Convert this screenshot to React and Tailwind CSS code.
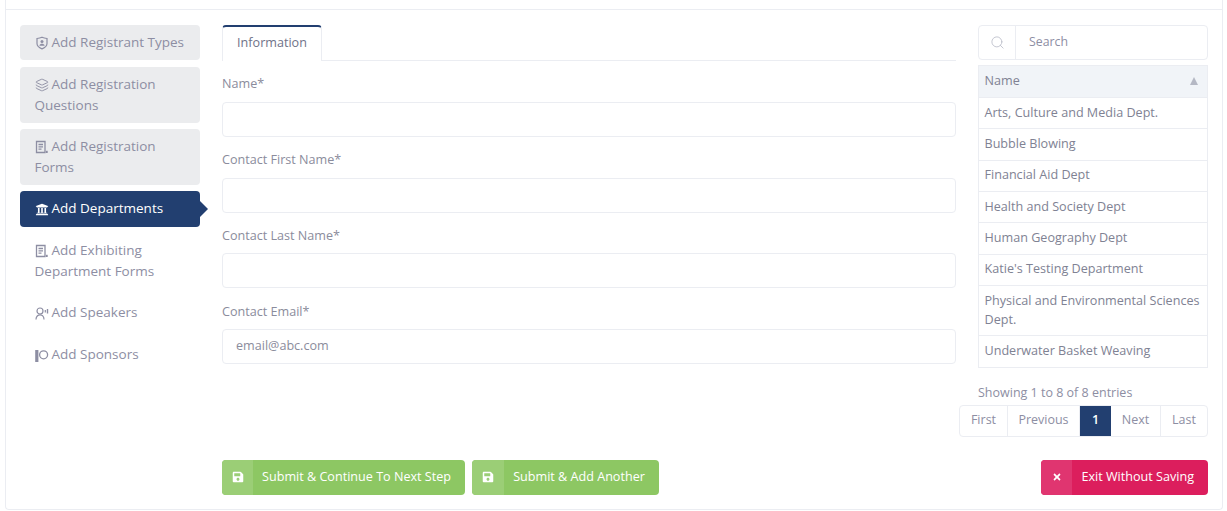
import { FaSave, FaTimes, FaUniversity } from "react-icons/fa";
import { Layers, Search } from "lucide-react";

const FONT = "font-['Open_Sans',sans-serif]";
const ICON = "inline-block w-3.5 h-3.5 mr-[3px] align-[-3px]";

function ShieldIcon() {
  return (
    <svg viewBox="0 0 14 14" className={ICON} fill="none" stroke="currentColor" strokeWidth="1.200">
      <path d="M2 2.500c2-.2 3.500-.6 5-1.300 1.500.7 3 1.100 5 1.300v5c0 2.500-2.200 4.200-5 5.400-2.800-1.200-5-2.900-5-5.400z" />
      <circle cx="7" cy="5.600" r="1.500" fill="currentColor" stroke="none" />
      <path d="M4.300 9.800c.4-1.500 1.500-2 2.700-2s2.300.5 2.700 2z" fill="currentColor" stroke="none" />
    </svg>
  );
}

function FormIcon() {
  return (
    <svg viewBox="0 0 14 14" className={ICON} fill="none" stroke="currentColor" strokeWidth="1.300">
      <path d="M1.500 1.500h8.500v11h-8.500z" />
      <path d="M3.500 4.500h4.500M3.500 6.800h4.500M3.500 9.100h3" />
      <path d="M11.800 10.800v2.200" strokeWidth="1.800" />
    </svg>
  );
}

function SpeakerIcon() {
  return (
    <svg viewBox="0 0 14 14" className={ICON} fill="none" stroke="currentColor" strokeWidth="1.200">
      <circle cx="5" cy="5" r="3" />
      <path d="M1 13.500c0-3 2-4.700 4-4.700s4 1.700 4 4.700" />
      <path d="M10.300 4v2.500" strokeWidth="1.200" />
      <path d="M12.500 3v4.500" strokeWidth="1.400" />
    </svg>
  );
}

function SponsorIcon() {
  return (
    <svg viewBox="0 0 14 14" className={ICON} fill="none" stroke="currentColor">
      <path d="M1.800 2v12" strokeWidth="3.200" />
      <circle cx="8.600" cy="6.800" r="4" strokeWidth="1.300" />
    </svg>
  );
}

const navItems = [
  { label: "Add Registrant Types", icon: <ShieldIcon />, filled: true, h: "h-[35px] mb-px" },
  { label: "Add Registration Questions", icon: <Layers className={ICON} strokeWidth={1.6} />, filled: true },
  { label: "Add Registration Forms", icon: <FormIcon />, filled: true },
  { label: "Add Departments", icon: <FaUniversity className="mr-[3px] inline-block h-[13px] w-3.5 align-[-3px]" />, active: true, h: "h-9" },
  { label: "Add Exhibiting Department Forms", icon: <FormIcon /> },
  { label: "Add Speakers", icon: <SpeakerIcon />, h: "h-9" },
  { label: "Add Sponsors", icon: <SponsorIcon />, h: "h-9" },
];

const fields = [
  { label: "Name*", mt: "mt-2" },
  { label: "Contact First Name*", mt: "mt-2" },
  { label: "Contact Last Name*", mt: "mt-[7px]", mb: "mb-px" },
  { label: "Contact Email*", mt: "mt-[7px]", placeholder: "email@abc.com" },
];

const departments = [
  "Arts, Culture and Media Dept.",
  "Bubble Blowing",
  "Financial Aid Dept",
  "Health and Society Dept",
  "Human Geography Dept",
  "Katie's Testing Department",
  "Physical and Environmental Sciences Dept.",
  "Underwater Basket Weaving",
];

const pages = [
  { label: "First", w: "w-[48px]" },
  { label: "Previous", w: "w-[72px]" },
  { label: "1", w: "w-[31px]" },
  { label: "Next", w: "w-[50px]" },
  { label: "Last", w: "flex-1" },
];

function NavItem({ item }) {
  let color = "text-[#8d8ea3]";
  if (item.filled) color = "bg-[#ebecee] text-[#8d8ea3]";
  if (item.active) color = "bg-[#223f70] text-white";
  return (
    <div className={`relative rounded pl-[14.500px] pr-[10px] py-[7px] text-[13.500px] leading-[21px] ${color} ${item.h || ""}`}>
      {item.icon}
      {item.label}
      {item.active ? (
        <span className="absolute left-full top-1/2 -translate-y-1/2 border-y-[8px] border-l-[8px] border-y-transparent border-l-[#223f70]" />
      ) : null}
    </div>
  );
}

function ActionButton({ icon, label, color, shade, w }) {
  return (
    <button className={`flex h-[35px] items-stretch overflow-hidden rounded text-[12.600px] text-white ${color} ${w}`}>
      <span className={`flex w-8 items-center justify-center pb-px ${shade}`}>{icon}</span>
      <span className="flex flex-1 items-center justify-center pb-px pl-[9px] pr-[14px] whitespace-nowrap">{label}</span>
    </button>
  );
}

export default function App() {
  return (
    <div className={`${FONT} h-[511px] w-[1227px] overflow-hidden bg-white pl-[5px] pr-[4px]`}>
      <div className="h-[510px] rounded-b border-x border-b border-[#ebedf2] pt-[9px]">
        <div className="flex h-full flex-col border-t border-[#ebedf2] pl-[14px] pr-[14px] pt-[15px]">
          <div className="flex h-[411px]">
            <aside className="flex w-[180px] shrink-0 flex-col gap-1.5">
              {navItems.map((item) => (
                <NavItem key={item.label} item={item} />
              ))}
            </aside>

            <main className="ml-[22px] w-[734px] shrink-0">
              <div className="border-b border-[#ebedf2]">
                <div className="-mb-px h-9 w-[100px] rounded-t border-x border-t-2 border-x-[#ebedf2] border-t-[#223f70] bg-white text-center text-[12.600px] leading-[32px] text-[#6f7288]">
                  Information
                </div>
              </div>
              <div className="mt-[13px] flex flex-col gap-[13px]">
                {fields.map((f) => (
                  <div key={f.label} className={f.mb}>
                    <div className="text-[12.600px] leading-[20px] text-[#8b8c9c]">{f.label}</div>
                    <div className={`${f.mt} flex h-[35px] items-center rounded border border-[#ebedf2] pb-px pl-[13px] text-[12.600px] text-[#8b8c9c]`}>
                      {f.placeholder}
                    </div>
                  </div>
                ))}
              </div>
            </main>

            <section className="ml-[22px] w-[230px] shrink-0">
              <div className="flex h-[35px] items-center rounded border border-[#ebedf2] text-[12.300px] text-[#8d8ea3]">
                <span className="flex h-full w-[37px] items-center justify-center border-r border-[#ebedf2]">
                  <Search className="h-[15px] w-[15px] text-[#b8bac6]" strokeWidth={1.300} />
                </span>
                <span className="pl-[13px]">Search</span>
              </div>
              <div className="mt-[5px] border border-[#ebedf2] text-[12.600px] leading-[19px] text-[#808293]">
                <div className="flex h-[31px] items-center justify-between bg-[#f1f4f8] pb-[2px] pl-[5.500px] pr-[9px]">
                  <span>Name</span>
                  <span className="border-x-[4px] border-b-[8px] border-x-transparent border-b-[#b5b8c4]" />
                </div>
                {departments.map((d) => (
                  <div key={d} className="border-t border-[#ebedf2] pl-[5.500px] pr-[2px] pt-[4.800px] pb-[6.530px]">
                    {d}
                  </div>
                ))}
              </div>
              <div className="mt-[15px] text-[12.500px] leading-[20px] text-[#8d8ea3]">Showing 1 to 8 of 8 entries</div>
              <div className="-ml-[19px] mt-[2px] flex h-[32px] w-[249px] overflow-hidden rounded border border-[#ebedf2] text-[12.500px] text-[#8d8ea3]">
                {pages.map((p) => (
                  <div
                    key={p.label}
                    className={`flex items-center justify-center pb-px ${p.w} ${p.label === "1" ? "bg-[#223f70] font-semibold text-white" : "border-r border-[#ebedf2] last:border-r-0"}`}
                  >
                    {p.label}
                  </div>
                ))}
              </div>
            </section>
          </div>

          <div className="ml-[202px] mt-[24px] flex gap-[7px]">
            <ActionButton icon={<FaSave className="h-3 w-3" />} label="Submit & Continue To Next Step" color="bg-[#8dc763]" shade="bg-[#9bce76]" w="w-[243px]" />
            <ActionButton icon={<FaSave className="h-3 w-3" />} label="Submit & Add Another" color="bg-[#8dc763]" shade="bg-[#9bce76]" w="w-[187px]" />
            <div className="ml-auto">
              <ActionButton icon={<FaTimes className="h-2.5 w-2.5" />} label="Exit Without Saving" color="bg-[#dc1e5d]" shade="bg-[#e03570]" w="w-[167px]" />
            </div>
          </div>
        </div>
      </div>
    </div>
  );
}
